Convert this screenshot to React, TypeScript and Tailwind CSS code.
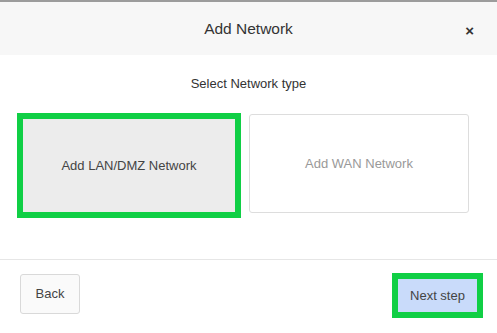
import React, { useState } from "react";

const font = { fontFamily: '"Liberation Sans", Arial, sans-serif' };

const AddNetwork = () => {
  const [type, setType] = useState<string>("lan");

  return (
    <div className="w-[497px] h-[333px] bg-white flex flex-col" style={font}>
      {/* header */}
      <div className="h-[55px] border-t-2 border-[#9c9c9c] bg-[#f7f7f7] flex items-center relative">
        <p className="w-full text-center text-[15.5px] text-[#333] pt-[1px]">
          Add Network
        </p>
        <button className="absolute right-[23px] top-[21px] text-[15px] font-bold text-[#333] leading-none">
          ×
        </button>
      </div>

      {/* body */}
      <div className="flex-1 flex flex-col">
        <p className="text-center text-[13px] leading-[16px] text-[#333] mt-[21px]">
          Select Network type
        </p>
        <div className="flex flex-row items-start pl-[17px] gap-[8px] mt-[21px]">
          <div
            className={
              type === "lan"
                ? "w-[224px] h-[105px] border-[6px] border-[#10cf45] bg-[#ececec] flex items-center justify-center text-[13px] text-[#444] cursor-pointer"
                : "w-[224px] h-[105px] border border-[#ddd] rounded-[3px] bg-white flex items-center justify-center text-[13px] text-[#999] cursor-pointer"
            }
            onClick={() => setType("lan")}
          >
            Add LAN/DMZ Network
          </div>
          <div
            className={
              type === "wan"
                ? "w-[220px] h-[99px] mt-[1px] border-[6px] border-[#10cf45] bg-[#ececec] flex items-center justify-center text-[13px] text-[#444] cursor-pointer"
                : "w-[220px] h-[99px] mt-[1px] border border-[#ddd] rounded-[3px] bg-white flex items-center justify-center text-[13px] text-[#999] cursor-pointer"
            }
            onClick={() => setType("wan")}
          >
            Add WAN Network
          </div>
        </div>
      </div>

      {/* footer */}
      <div className="h-[74px] border-t border-[#e6e6e6] flex flex-row items-start justify-between pl-[20px] pr-[14px] pt-[13px]">
        <button className="w-[60px] h-[40px] mt-[1px] bg-[#fafafa] border border-[#d9d9d9] rounded-[3px] text-[13px] text-[#444]">
          Back
        </button>
        <button className="w-[91px] h-[45px] border-[6px] border-[#10cf45] bg-[#c9dbfa] text-[13px] text-[#444]">
          Next step
        </button>
      </div>
    </div>
  );
};

export default function App() {
  return <AddNetwork />;
}
